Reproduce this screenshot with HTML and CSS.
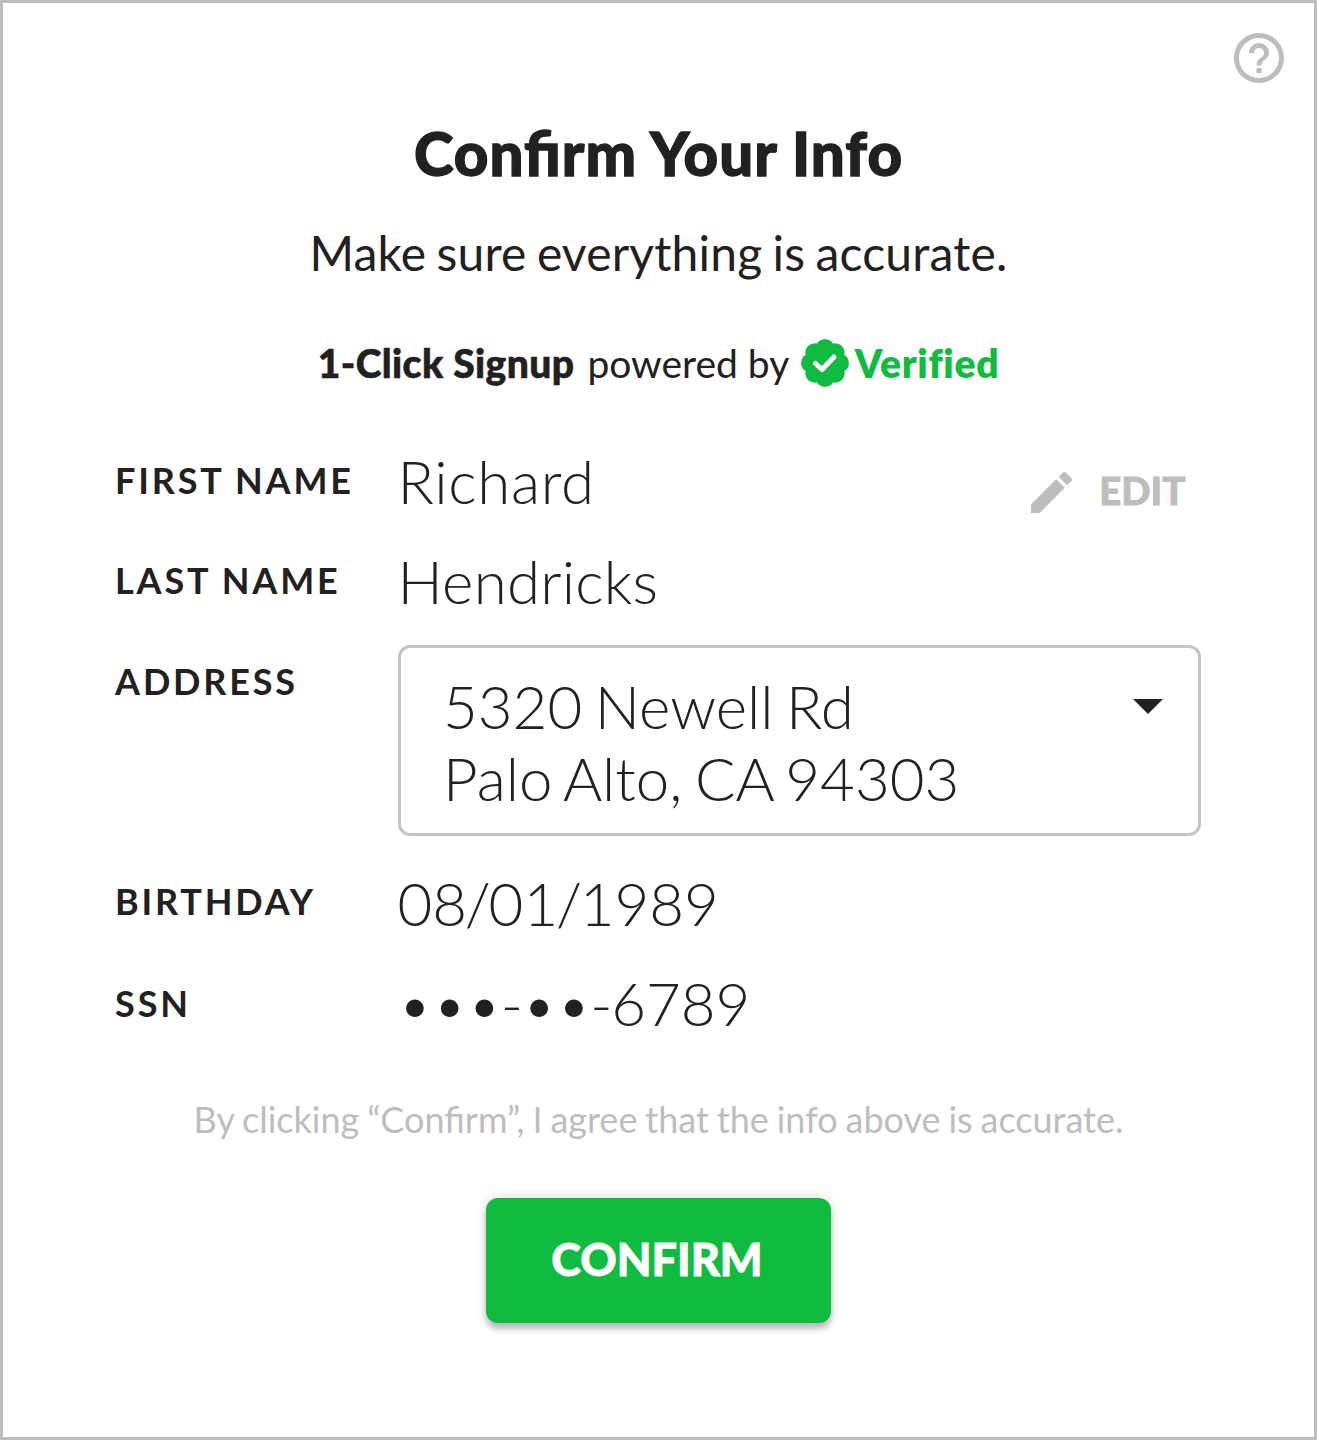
FILE: index.html
```html
<!DOCTYPE html>
<html lang="en">
<head>
<meta charset="utf-8">
<title>Confirm Your Info</title>
<link rel="stylesheet" href="styles.css">
</head>
<body>
<main class="card">
  <header class="topbar">
    <svg class="help" viewBox="2 2 20 20" role="img" aria-label="Help"><path fill="currentColor" d="M11 18h2v-2h-2v2zm1-16C6.480 2 2 6.480 2 12s4.480 10 10 10 10-4.480 10-10S17.520 2 12 2zm0 18c-4.410 0-8-3.590-8-8s3.590-8 8-8 8 3.590 8 8-3.590 8-8 8zm0-14c-2.210 0-4 1.790-4 4h2c0-1.100.900-2 2-2s2 .900 2 2c0 2-3 1.750-3 5h2c0-2.250 3-2.500 3-5 0-2.210-1.790-4-4-4z"/></svg>
  </header>
  <h1 class="title">Confirm Your Info</h1>
  <p class="subtitle">Make sure everything is accurate.</p>
  <div class="powered">
    <strong class="product">1-Click Signup</strong>
    <span class="by">powered by</span>
    <svg class="seal" viewBox="0 0 48 48">
      <g fill="currentColor"><circle cx="24" cy="24" r="18"/><circle cx="24" cy="9.500" r="9.500"/><circle cx="34.200" cy="13.800" r="9.500"/><circle cx="38.500" cy="24" r="9.500"/><circle cx="34.200" cy="34.200" r="9.500"/><circle cx="24" cy="38.500" r="9.500"/><circle cx="13.800" cy="34.200" r="9.500"/><circle cx="9.500" cy="24" r="9.500"/><circle cx="13.800" cy="13.800" r="9.500"/></g>
      <path d="M14.500 24.500l6.500 6 12-12.500" fill="none" stroke="#fff" stroke-width="5" stroke-linecap="round" stroke-linejoin="round"/>
    </svg>
    <strong class="brand">Verified</strong>
  </div>
  <dl class="info">
    <dt class="label">FIRST NAME</dt>
    <dd class="value with-edit"><span class="first">Richard</span>
      <button class="edit" type="button"><svg class="pencil" viewBox="3 3 18 18"><path fill="currentColor" d="M3 17.250V21h3.750L17.810 9.940l-3.750-3.750L3 17.250zM20.710 7.040c.390-.390.390-1.020 0-1.410l-2.340-2.340c-.390-.390-1.020-.390-1.410 0l-1.830 1.830 3.750 3.750 1.830-1.830z"/></svg><span class="edit-text">EDIT</span></button>
    </dd>
    <dt class="label">LAST NAME</dt>
    <dd class="value last">Hendricks</dd>
    <dt class="label">ADDRESS</dt>
    <dd class="value select">
      <span>5320 Newell Rd<br>Palo Alto, CA 94303</span>
      <svg class="caret" viewBox="0 0 30 15"><path fill="currentColor" d="M0 0h30L15 15z"/></svg>
    </dd>
    <dt class="label birthday">BIRTHDAY</dt>
    <dd class="value birthday">08<span class="slash">/</span>01<span class="slash">/</span>1989</dd>
    <dt class="label">SSN</dt>
    <dd class="value">•••<span class="dash">-</span>••<span class="dash">-</span>6789</dd>
  </dl>
  <p class="legal">By clicking “Confirm”, I agree that the info above is accurate.</p>
  <button class="confirm" type="button">CONFIRM</button>
</main>
</body>
</html>
```
FILE: styles.css
```css
* { box-sizing: border-box; }
body { margin: 0; background: #fff; }
h1, p, dl, dd { margin: 0; }
button { border: 0; padding: 0; font-family: inherit; }
.card {
  height: 1440px;
  border: 3px solid #bdbdbd;
  display: flex;
  flex-direction: column;
  align-items: center;
  font-family: Lato, sans-serif;
  color: #212121;
}
.topbar { align-self: stretch; display: flex; justify-content: flex-end; padding: 30px 30px 0 0; }
.help { width: 50px; height: 50px; color: #bdbdbd; }
.title {
  margin-top: 34px;
  font-size: 60px;
  line-height: 72px;
  font-weight: 900;
  letter-spacing: 1.050px;
  font-feature-settings: "liga" 1;
  -webkit-text-stroke: 1.300px currentColor;
}
.subtitle { margin-top: 35px; font-size: 48px; line-height: 58px; letter-spacing: .17px; word-spacing: -2.200px; }
.powered { margin-top: 54.5px; display: flex; align-items: center; height: 52px; font-size: 39px; line-height: 48px; }
.product { font-weight: 900; letter-spacing: .4px; -webkit-text-stroke: .6px currentColor; }
.by { margin-left: 13px; }
.seal { width: 48px; height: 48px; margin-left: 11.5px; color: #0fbc3f; }
.brand { margin-left: 6px; color: #0fbc3f; font-weight: 800; letter-spacing: .7px; }
.info {
  width: 1088px;
  margin: 56px 0 0;
  display: grid;
  grid-template-columns: 283px 803px;
  row-gap: 28.25px;
}
.label { padding: 13.5px 0 0 .6px; font-size: 36px; line-height: 44px; font-weight: 700; letter-spacing: 2.8px; }
.value { font-size: 60px; line-height: 72px; font-weight: 300; }
.first { letter-spacing: .7px; }
.last { padding-top: .5px; margin-bottom: -.5px; letter-spacing: .25px; }
.with-edit { display: flex; justify-content: space-between; padding-right: 15px; }
.edit {
  display: flex;
  align-items: center;
  gap: 27px;
  margin-top: 24px;
  height: 48px;
  background: none;
  color: #bdbdbd;
  font-size: 38.5px;
  font-weight: 900;
  line-height: 48px;
}
.edit-text { padding-bottom: 6px; -webkit-text-stroke: .8px currentColor; }
.pencil { width: 41px; height: 41px; }
.select {
  display: flex;
  justify-content: space-between;
  height: 191px;
  padding: 22px 35px 0 42.5px;
  border: 3px solid #c4c4c4;
  border-radius: 12px;
  word-spacing: -3.800px;
}
.caret { width: 30px; height: 15px; margin-top: 29px; }
.birthday { margin-top: 2.5px; }
.label.birthday { padding-top: 12.5px; }
.slash { margin: 0 -2.300px; }
.dash { margin: 0 -1.200px; }
.legal { margin-top: 57.5px; font-size: 36px; line-height: 44px; color: #bdbdbd; word-spacing: -1.300px; }
.confirm {
  width: 345px;
  height: 125px;
  margin-top: 57px;
  padding: 0 3px 2px 0;
  border-radius: 12px;
  background: #0fbc3f;
  color: #fff;
  font-size: 45px;
  font-weight: 900;
  -webkit-text-stroke: .8px currentColor;
  box-shadow: 0 6px 6px rgba(0, 0, 0, .24), 0 0 12px rgba(0, 0, 0, .12);
}
```
